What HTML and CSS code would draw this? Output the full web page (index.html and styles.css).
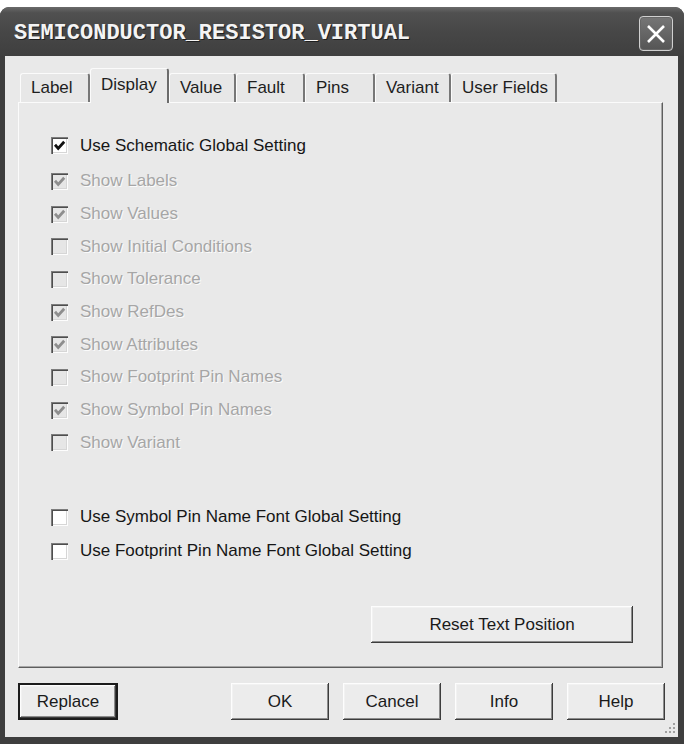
FILE: index.html
```html
<!DOCTYPE html>
<html lang="en">
<head>
    <meta charset="UTF-8">
    <title>SEMICONDUCTOR_RESISTOR_VIRTUAL</title>
    <link rel="stylesheet" href="styles.css">
</head>
<body>
    <div class="window">
        <div class="titlebar">
            <span class="title">SEMICONDUCTOR_RESISTOR_VIRTUAL</span>
            <button class="close" type="button">
                <svg width="22" height="22" viewBox="0 0 22 22">
                    <path d="M3 3 L19 19 M19 3 L3 19" stroke="#fff" stroke-width="2.6" fill="none"/>
                </svg>
            </button>
        </div>

        <div class="client">
            <div class="tabs">
                <div class="tab">Label</div>
                <div class="tab active">Display</div>
                <div class="tab">Value</div>
                <div class="tab">Fault</div>
                <div class="tab">Pins</div>
                <div class="tab">Variant</div>
                <div class="tab">User Fields</div>
            </div>

            <div class="panel">
                <div class="check first">
                    <span class="box on">
                        <svg width="17" height="17" viewBox="0 0 17 17"><polyline points="4,7.8 7.2,11.4 13.2,4.8" fill="none" stroke="#111" stroke-width="2.8"/></svg>
                    </span>
                    Use Schematic Global Setting
                </div>

                <div class="group">
                    <div class="check disabled">
                        <span class="box"><svg width="17" height="17" viewBox="0 0 17 17"><polyline points="4,7.8 7.2,11.4 13.2,4.8" fill="none" stroke="#8e8e8e" stroke-width="2.8"/></svg></span>
                        Show Labels
                    </div>
                    <div class="check disabled">
                        <span class="box"><svg width="17" height="17" viewBox="0 0 17 17"><polyline points="4,7.8 7.2,11.4 13.2,4.8" fill="none" stroke="#8e8e8e" stroke-width="2.8"/></svg></span>
                        Show Values
                    </div>
                    <div class="check disabled">
                        <span class="box"></span>
                        Show Initial Conditions
                    </div>
                    <div class="check disabled">
                        <span class="box"></span>
                        Show Tolerance
                    </div>
                    <div class="check disabled">
                        <span class="box"><svg width="17" height="17" viewBox="0 0 17 17"><polyline points="4,7.8 7.2,11.4 13.2,4.8" fill="none" stroke="#8e8e8e" stroke-width="2.8"/></svg></span>
                        Show RefDes
                    </div>
                    <div class="check disabled">
                        <span class="box"><svg width="17" height="17" viewBox="0 0 17 17"><polyline points="4,7.8 7.2,11.4 13.2,4.8" fill="none" stroke="#8e8e8e" stroke-width="2.8"/></svg></span>
                        Show Attributes
                    </div>
                    <div class="check disabled">
                        <span class="box"></span>
                        Show Footprint Pin Names
                    </div>
                    <div class="check disabled">
                        <span class="box"><svg width="17" height="17" viewBox="0 0 17 17"><polyline points="4,7.8 7.2,11.4 13.2,4.8" fill="none" stroke="#8e8e8e" stroke-width="2.8"/></svg></span>
                        Show Symbol Pin Names
                    </div>
                    <div class="check disabled">
                        <span class="box"></span>
                        Show Variant
                    </div>
                </div>

                <div class="fonts">
                    <div class="check">
                        <span class="box on"></span>
                        Use Symbol Pin Name Font Global Setting
                    </div>
                    <div class="check">
                        <span class="box on"></span>
                        Use Footprint Pin Name Font Global Setting
                    </div>
                </div>

                <div class="panel-actions">
                    <button class="btn reset" type="button">Reset Text Position</button>
                </div>
            </div>

            <div class="actions">
                <button class="btn default" type="button">Replace</button>
                <div class="actions-right">
                    <button class="btn" type="button">OK</button>
                    <button class="btn" type="button">Cancel</button>
                    <button class="btn" type="button">Info</button>
                    <button class="btn" type="button">Help</button>
                </div>
            </div>

            <svg class="grip" width="14" height="14" viewBox="0 0 14 14">
                <rect x="10" y="2" width="2" height="2" fill="#a0a0a0"/>
                <rect x="6" y="6" width="2" height="2" fill="#a0a0a0"/>
                <rect x="10" y="6" width="2" height="2" fill="#a0a0a0"/>
                <rect x="2" y="10" width="2" height="2" fill="#a0a0a0"/>
                <rect x="6" y="10" width="2" height="2" fill="#a0a0a0"/>
                <rect x="10" y="10" width="2" height="2" fill="#a0a0a0"/>
            </svg>
        </div>
    </div>
</body>
</html>
```

FILE: styles.css
```css
body {
    margin: 0;
    background: #fff;
    font-family: 'Liberation Sans', Arial, sans-serif;
    font-size: 17px;
    color: #151515;
}

.window {
    width: 684px;
    height: 737px;
    margin-top: 7px;
    background: #3e3e3e;
    border-radius: 9px 9px 0 0;
    box-sizing: border-box;
    overflow: hidden;
}

.titlebar {
    height: 49px;
    box-sizing: border-box;
    padding: 4px 11px 0 14px;
    display: flex;
    align-items: center;
    justify-content: space-between;
    background: linear-gradient(#6a6a6a 0, #505050 12%, #474747 50%, #3f3f3f 100%);
}

.title {
    font-family: 'Liberation Mono', monospace;
    font-weight: bold;
    font-size: 22px;
    color: #f4f4f4;
    text-shadow: 1px 1px 0 #1e1e1e;
}

.close {
    width: 34px;
    height: 35px;
    padding: 0;
    display: flex;
    align-items: center;
    justify-content: center;
    border: 1px solid #d0d0d0;
    border-radius: 4px;
    background: linear-gradient(#767676, #555);
    box-shadow: inset 0 0 0 1px #666;
}

.client {
    position: relative;
    height: 681px;
    margin: 0 6px 0 5px;
    background: #e9e9e9;
    box-sizing: border-box;
    padding: 12px 15px 0 13px;
}

.tabs {
    display: grid;
    grid-template-columns: 70px 79px 67px 69px 70px 76px 106px;
    align-items: end;
    height: 34px;
    padding-left: 2px;
}

.tab {
    height: 29px;
    box-sizing: border-box;
    padding-left: 10px;
    display: flex;
    align-items: center;
    background: #e7e7e7;
    border-top: 1px solid #fbfbfb;
    border-left: 1px solid #fbfbfb;
    border-right: 2px solid #777;
    border-radius: 3px 3px 0 0;
    color: #1e1e1e;
}

.tab.active {
    position: relative;
    z-index: 1;
    height: 35px;
    margin-bottom: -1px;
    padding-bottom: 2px;
    background: #e9e9e9;
    border-right-color: #6c6c6c;
}

.panel {
    height: 566px;
    box-sizing: border-box;
    border: 1px solid;
    border-color: #fbfbfb #5e5e5e #5e5e5e #fbfbfb;
    box-shadow: inset -1px -1px 0 #a8a8a8;
    padding: 26px 29px 0 32px;
    display: flex;
    flex-direction: column;
}

.check {
    display: flex;
    align-items: center;
    gap: 12px;
    height: 33px;
    color: #161616;
}

.check.disabled {
    color: #a6a6a6;
    text-shadow: 1px 1px 0 #fbfbfb;
}

.group {
    margin-top: 3px;
}

.group .check {
    height: 32.7px;
}

.box {
    width: 17px;
    height: 17px;
    flex: none;
    box-sizing: border-box;
    background: #e6e6e6;
    box-shadow: inset 1px 1px 0 #7c7c7c, inset 2px 2px 0 #4e4e4e, inset -1px -1px 0 #fdfdfd, inset -2px -2px 0 #d6d6d6;
}

.box.on {
    background: #fff;
}

.box svg {
    display: block;
}

.fonts {
    margin-top: 41px;
}

.fonts .check {
    height: 34px;
}

.panel-actions {
    display: flex;
    justify-content: flex-end;
    margin-top: 38px;
}

.btn {
    height: 37px;
    width: 98px;
    padding: 0;
    font-family: 'Liberation Sans', Arial, sans-serif;
    font-size: 17px;
    color: #1a1a1a;
    background: #ececec;
    border: none;
    box-shadow: inset -1px -1px 0 #3c3c3c, inset 1px 1px 0 #fdfdfd, inset -2px -2px 0 #8c8c8c, inset 2px 2px 0 #f2f2f2;
}

.btn.reset {
    width: 262px;
}

.btn.default {
    width: 100px;
    border: 2px solid #1c1c1c;
}

.actions {
    display: flex;
    justify-content: space-between;
    margin-top: 15px;
    margin-right: -2px;
}

.actions-right {
    display: flex;
    gap: 14px;
}

.grip {
    position: absolute;
    right: 1px;
    bottom: 2px;
}
```
